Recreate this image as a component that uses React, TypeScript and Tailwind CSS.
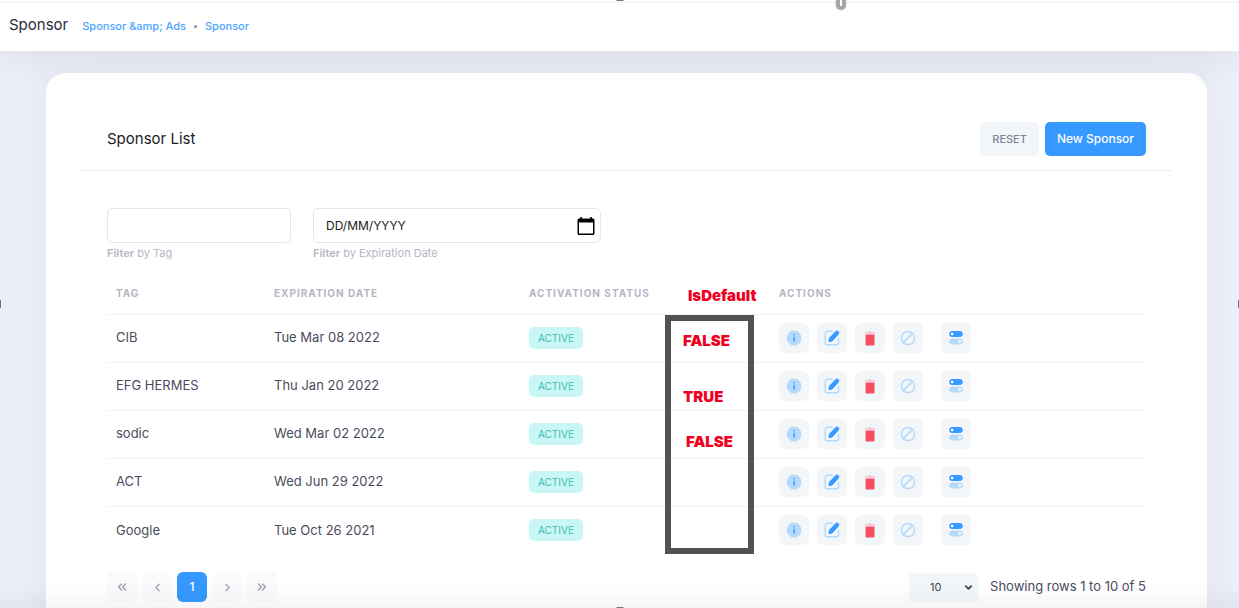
import React from "react";
import { ChevronLeft, ChevronRight, ChevronsLeft, ChevronsRight, ChevronDown } from "lucide-react";

const sponsors = [
  { tag: "CIB", expires: "Tue Mar 08 2022" },
  { tag: "EFG HERMES", expires: "Thu Jan 20 2022" },
  { tag: "sodic", expires: "Wed Mar 02 2022" },
  { tag: "ACT", expires: "Wed Jun 29 2022" },
  { tag: "Google", expires: "Tue Oct 26 2021" },
];

function InfoIcon() {
  return (
    <svg width="16" height="16" viewBox="0 0 16 16" aria-hidden="true">
      <circle cx="8" cy="8" r="7.4" fill="#b5d9fb" />
      <rect x="7.3" y="6.6" width="1.5" height="5" rx="0.4" fill="#3699ff" />
      <circle cx="8" cy="4.8" r="0.8" fill="#3699ff" />
    </svg>
  );
}

function EditIcon() {
  return (
    <svg width="16" height="16" viewBox="0 0 16 16" aria-hidden="true">
      <path
        d="M8.4 1.3H3.2A2 2 0 0 0 1.2 3.3v9.4a2 2 0 0 0 2 2h9.4a2 2 0 0 0 2-2V8.4"
        fill="none"
        stroke="#b5d9fb"
        strokeWidth="1.4"
        strokeLinecap="round"
      />
      <path
        d="M5 11.8l.3-3.6 6.4-6.6c.8-.8 1.9-.7 2.6 0s.8 1.8 0 2.6L8.2 11z"
        fill="#3699ff"
        stroke="#3699ff"
        strokeWidth="0.9"
        strokeLinejoin="round"
      />
    </svg>
  );
}

function TrashIcon() {
  return (
    <svg width="16" height="16" viewBox="0 0 16 16" aria-hidden="true">
      <path d="M3 2.3h3.6V1.4h2.8v.9H13v1.1H3z" fill="#fab6c2" />
      <path d="M3.6 4.5h8.9v10a1 1 0 0 1-1 1H4.6a1 1 0 0 1-1-1z" fill="#f64e60" />
    </svg>
  );
}

function BlockIcon() {
  return (
    <svg width="16" height="16" viewBox="0 0 16 16" aria-hidden="true">
      <circle cx="8" cy="8" r="6.6" fill="none" stroke="#b5d9fb" strokeWidth="1.5" />
      <path d="M3.4 12.6l9.2-9.2" stroke="#b5d9fb" strokeWidth="1.5" />
    </svg>
  );
}

function SwitchesIcon() {
  return (
    <svg width="16" height="16" viewBox="0 0 16 16" aria-hidden="true">
      <rect x="1.3" y="1" width="13.4" height="6" rx="3" fill="#3699ff" />
      <circle cx="4.2" cy="4" r="1.3" fill="#fff" />
      <rect x="1.3" y="8.6" width="13.4" height="5.8" rx="2.9" fill="#b5d9fb" />
      <circle cx="11.7" cy="11.5" r="1.3" fill="#fff" />
    </svg>
  );
}

function CalendarIcon() {
  return (
    <svg width="18" height="20" viewBox="0 0 18 20" aria-hidden="true">
      <path
        fillRule="evenodd"
        d="M3.2 1h1.6v1.6h8.4V1h1.6v1.6H16a1.5 1.5 0 0 1 1.5 1.5v13.4A1.5 1.5 0 0 1 16 19H2a1.5 1.5 0 0 1-1.5-1.5V4.1A1.5 1.5 0 0 1 2 2.6h1.2zM2 6.6v11h14v-11z"
        fill="#000"
      />
    </svg>
  );
}

function ActionButton({
  label,
  className = "",
  children,
}: {
  label: string;
  className?: string;
  children: React.ReactNode;
}) {
  return (
    <button
      type="button"
      aria-label={label}
      className={`flex size-[30px] items-center justify-center rounded-md bg-[#f3f6f9] ${className}`}
    >
      {children}
    </button>
  );
}

function PageButton({ label, children }: { label: string; children: React.ReactNode }) {
  return (
    <button
      type="button"
      aria-label={label}
      className="flex size-[30px] items-center justify-center rounded-md bg-[#f9fafc] text-[#a9abbd]"
    >
      {children}
    </button>
  );
}

function Header() {
  return (
    <header className="relative z-10 flex h-[51px] items-center gap-3.5 bg-white px-[9px] shadow-[0_10px_30px_0_rgba(82,63,105,0.08)]">
      <div className="absolute inset-x-0 top-0.5 h-px bg-[#f0f0f2]" />
      <div className="absolute left-1/2 top-0 h-px w-[7px] -translate-x-1/2 bg-[#777]" />
      <div className="absolute left-[67.5%] top-0 flex h-2.5 w-2.5 justify-center rounded-b-full bg-[#a6a6a6] shadow-[0_0_2px_#bbb]">
        <div className="h-1.5 w-0.5 bg-white" />
      </div>
      <h1 className="text-[15px] text-[#2b2b40]">Sponsor</h1>
      <nav aria-label="Breadcrumb" className="flex items-center gap-2 pt-0.5 text-[11px] font-medium text-[#4ca4fc]">
        <a href="#ads">Sponsor &amp;amp; Ads</a>
        <span className="size-[3px] rounded-full bg-[#8b8da5]" />
        <a href="#sponsor">Sponsor</a>
      </nav>
    </header>
  );
}

function Filters() {
  return (
    <div className="flex gap-[22px] text-[11px] text-[#b5b5c3]">
      <div className="w-[184px]">
        <input
          id="tag"
          type="text"
          className="block h-[35px] w-full rounded-[5px] border border-[#e4e6ef] px-3 text-xs text-[#3f4254]"
        />
        <label htmlFor="tag" className="mt-0.5 block leading-4">
          <b className="font-semibold">Filter</b> by Tag
        </label>
      </div>
      <div className="w-72">
        <div className="flex h-[35px] items-center rounded-[5px] border border-[#e4e6ef] pl-3 pr-[5px]">
          <input
            id="expires"
            type="text"
            placeholder="DD/MM/YYYY"
            className="min-w-0 flex-1 text-xs text-[#222] placeholder:text-[#222]"
          />
          <button type="button" aria-label="Open calendar">
            <CalendarIcon />
          </button>
        </div>
        <label htmlFor="expires" className="mt-0.5 block leading-4">
          <b className="font-semibold">Filter</b> by Expiration Date
        </label>
      </div>
    </div>
  );
}

function SponsorTable() {
  return (
    <div className="relative mt-[13px]">
      <table className="w-full table-fixed text-left">
        <thead>
          <tr className="h-10 border-b border-[#f0f0f3] text-[10px] uppercase tracking-widest text-[#b5b5c3]">
            <th className="w-[158px] pl-[9px] font-bold">Tag</th>
            <th className="w-[255px] pl-[9px] font-bold">Expiration date</th>
            <th className="w-[250px] pl-[9px] font-bold">Activation status</th>
            <th className="pl-[9px] font-bold">Actions</th>
          </tr>
        </thead>
        <tbody>
          {sponsors.map((s) => (
            <tr key={s.tag} className="h-12 border-b border-[#f0f0f3] text-[13px] text-[#4a4c5e] last:border-0">
              <td className="pl-[9px]">{s.tag}</td>
              <td className="pl-[9px]">{s.expires}</td>
              <td className="pl-[9px]">
                <span className="inline-flex h-[22px] items-center rounded-[5px] bg-[#c9f7f5] px-[9px] text-[10px] text-[#3dbdb1]">
                  ACTIVE
                </span>
              </td>
              <td className="pl-[9px]">
                <div className="flex gap-2">
                  <ActionButton label="Details"><InfoIcon /></ActionButton>
                  <ActionButton label="Edit"><EditIcon /></ActionButton>
                  <ActionButton label="Delete"><TrashIcon /></ActionButton>
                  <ActionButton label="Block"><BlockIcon /></ActionButton>
                  <ActionButton label="Toggle status" className="ml-2.5"><SwitchesIcon /></ActionButton>
                </div>
              </td>
            </tr>
          ))}
        </tbody>
      </table>

      <div className="absolute left-[558px] top-3 w-[89px] text-[15px] font-black leading-5 text-[#f0001f]">
        <div className="pl-[23px]">IsDefault</div>
        <div className="mt-[9px] h-[239px] border-[6px] border-[#525252] pl-3 pt-2.5">
          <div>FALSE</div>
          <div className="mt-9">TRUE</div>
          <div className="mt-[25px] pl-[3px]">FALSE</div>
        </div>
      </div>
    </div>
  );
}

function Pagination() {
  return (
    <div className="mt-[18px] flex items-center justify-between text-[13px] text-[#4a4c5e]">
      <nav aria-label="Pagination" className="flex gap-[5px]">
        <PageButton label="First page"><ChevronsLeft size={14} strokeWidth={3} /></PageButton>
        <PageButton label="Previous page"><ChevronLeft size={13} strokeWidth={3} /></PageButton>
        <button
          type="button"
          aria-current="page"
          className="size-[30px] rounded-md bg-[#3699ff] text-xs font-medium text-white"
        >
          1
        </button>
        <PageButton label="Next page"><ChevronRight size={13} strokeWidth={3} /></PageButton>
        <PageButton label="Last page"><ChevronsRight size={14} strokeWidth={3} /></PageButton>
      </nav>
      <div className="flex items-center gap-3">
        <div className="relative">
          <select
            aria-label="Rows per page"
            defaultValue="10"
            className="h-[29px] w-[69px] appearance-none rounded bg-[#f3f6f9] pl-[21px] text-[11px] text-[#3f4254]"
          >
            <option>10</option>
            <option>25</option>
            <option>50</option>
          </select>
          <ChevronDown
            size={11}
            strokeWidth={4}
            className="pointer-events-none absolute right-1 top-[9px] text-[#3f4254]"
          />
        </div>
        <p>Showing rows 1 to 10 of 5</p>
      </div>
    </div>
  );
}

export default function App() {
  return (
    <div className="relative h-screen overflow-hidden bg-[#eceff8] font-['Inter','Liberation_Sans',sans-serif]">
      <Header />
      <main className="pl-[46px] pr-8 pt-[22px]">
        <section className="rounded-[20px] bg-white pb-10 pl-[34px] pr-[35px] pt-[49px] shadow-[0_0_30px_0_rgba(82,63,105,0.07)]">
          <div className="flex items-center justify-between border-b border-[#ebedf3] pb-3.5 pl-[27px] pr-[26px]">
            <h2 className="text-[15px] text-[#212121]">Sponsor List</h2>
            <div className="flex gap-1.5">
              <button type="button" className="h-[34px] rounded-[5px] bg-[#f3f6f9] px-3 text-[11px] font-medium text-[#7e8299]">
                RESET
              </button>
              <button type="button" className="h-[34px] rounded-[5px] bg-[#3699ff] px-3 text-xs font-medium text-white">
                New Sponsor
              </button>
            </div>
          </div>
          <div className="pl-[27px] pr-[26px] pt-[37px]">
            <Filters />
            <SponsorTable />
            <Pagination />
          </div>
        </section>
      </main>
      <div className="pointer-events-none absolute inset-x-0 bottom-0 h-6 bg-linear-to-b from-transparent to-black/4" />
      <div className="absolute left-0 top-1/2 h-2 w-px -translate-y-1/2 bg-[#777]" />
      <div className="absolute right-0 top-1/2 h-2 w-px -translate-y-1/2 bg-[#777]" />
      <div className="absolute bottom-0 left-1/2 h-px w-[7px] -translate-x-1/2 bg-[#777]" />
    </div>
  );
}
